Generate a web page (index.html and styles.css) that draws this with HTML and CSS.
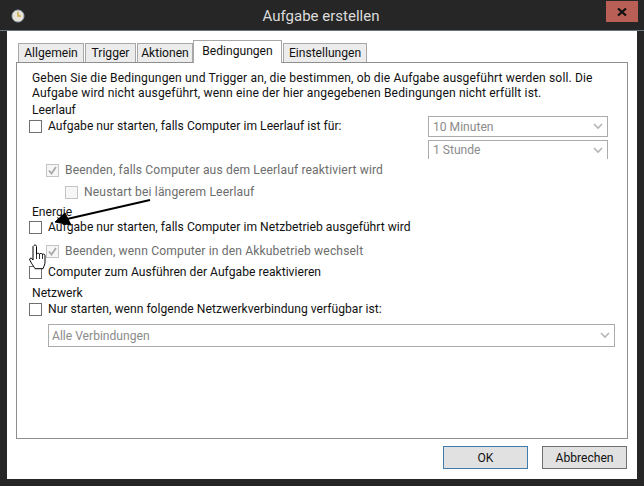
FILE: index.html
```html
<!DOCTYPE html>
<html lang="de">
<head>
<meta charset="utf-8">
<title>Aufgabe erstellen</title>
<link rel="stylesheet" href="styles.css">
</head>
<body>
<div class="window">
  <header class="titlebar">
    <svg class="app-icon" width="16" height="16" viewBox="0 0 16 16"><circle cx="8" cy="8" r="6" fill="#e8e4d8" stroke="#9aa6b0"/><path d="M8 4v4h3" fill="none" stroke="#c9a648" stroke-width="1.5"/></svg>
    <h1 class="title">Aufgabe erstellen</h1>
    <button class="close"><svg width="10" height="8" viewBox="0 0 10 8"><path d="M1 0.500l8 7M9 0.500l-8 7" stroke="#111" stroke-width="2.2"/></svg></button>
  </header>
  <main class="client">
    <nav class="tabs">
      <span class="tab t1">Allgemein</span>
      <span class="tab t2">Trigger</span>
      <span class="tab t3">Aktionen</span>
      <span class="tab active">Bedingungen</span>
      <span class="tab t5">Einstellungen</span>
    </nav>
    <section class="panel">
      <p class="intro">Geben Sie die Bedingungen und Trigger an, die bestimmen, ob die Aufgabe ausgeführt werden soll. Die Aufgabe wird nicht ausgeführt, wenn eine der hier angegebenen Bedingungen nicht erfüllt ist.</p>
      <h2 class="group">Leerlauf</h2>
      <div class="idle">
        <div class="idle-checks">
          <label class="check"><span class="box"></span>Aufgabe nur starten, falls Computer im Leerlauf ist für:</label>
        </div>
        <div class="idle-combos">
          <div class="combo disabled small"><span>10 Minuten</span><svg class="chev" width="10" height="7" viewBox="0 0 10 7"><path d="M1 1l4 4 4-4" fill="none" stroke="#b5b5b5" stroke-width="1.6"/></svg></div>
          <div class="combo disabled small cut"><span>1 Stunde</span><svg class="chev" width="10" height="7" viewBox="0 0 10 7"><path d="M1 1l4 4 4-4" fill="none" stroke="#b5b5b5" stroke-width="1.6"/></svg></div>
        </div>
      </div>
      <label class="check disabled ind1 r-end"><span class="box on"><svg width="11" height="11" viewBox="0 0 11 11"><path d="M2 5.5l2.5 3L9 2" fill="none" stroke="#a8a8a8" stroke-width="1.8"/></svg></span>Beenden, falls Computer aus dem Leerlauf reaktiviert wird</label>
      <label class="check disabled ind2 r-new"><span class="box"></span>Neustart bei längerem Leerlauf</label>
      <h2 class="group g-energy">Energie</h2>
      <label class="check r-a"><span class="box"></span>Aufgabe nur starten, falls Computer im Netzbetrieb ausgeführt wird</label>
      <label class="check disabled ind1 r-b"><span class="box on"><svg width="11" height="11" viewBox="0 0 11 11"><path d="M2 5.5l2.5 3L9 2" fill="none" stroke="#a8a8a8" stroke-width="1.8"/></svg></span>Beenden, wenn Computer in den Akkubetrieb wechselt</label>
      <label class="check r-c"><span class="box"></span>Computer zum Ausführen der Aufgabe reaktivieren</label>
      <h2 class="group g-net">Netzwerk</h2>
      <label class="check r-d"><span class="box"></span>Nur starten, wenn folgende Netzwerkverbindung verfügbar ist:</label>
      <div class="combo disabled wide"><span>Alle Verbindungen</span><svg class="chev" width="10" height="7" viewBox="0 0 10 7"><path d="M1 1l4 4 4-4" fill="none" stroke="#b5b5b5" stroke-width="1.6"/></svg></div>
    </section>
    <footer class="actions">
      <button class="btn primary">OK</button>
      <button class="btn">Abbrechen</button>
    </footer>
  </main>
  <svg class="arrow" width="100" height="32" viewBox="0 0 100 32"><path d="M95 1L12 20" stroke="#000" stroke-width="1.8" fill="none"/><path d="M0 23L10 14L16 26Z" fill="#000" stroke="#000" stroke-linejoin="round"/></svg>
  <svg class="hand" width="18" height="27" viewBox="0 0 18 27"><path d="M5 1.5c1-1 2.500-.5 2.500 1V10c1-1 2-1 3 0 1-.8 2-.8 3 .2 1-.5 2.500 0 2.500 1.500v6c0 3-1 4-2 7H6c-1-2-2-3-3.500-5.500L.8 16c-.5-1.500 1-2.500 2-1.500L4 16V2.500z" fill="#fff" stroke="#000" stroke-width="1"/><path d="M7.500 10v5M10.500 10v5M13.500 10v5" stroke="#000" stroke-width=".8"/></svg>
</div>
</body>
</html>
```
FILE: styles.css
```css
* { box-sizing: border-box; }
html, body { margin: 0; padding: 0; }
body { width: 644px; height: 486px; overflow: hidden; background: #262626; font-family: Roboto, "Noto Sans", sans-serif; font-size: 12.1px; color: #111; }
.window { position: relative; width: 644px; height: 486px; display: flex; flex-direction: column; background: #262626; }
.titlebar { height: 31px; flex: none; display: flex; align-items: flex-start; position: relative; border-bottom: 1px solid #6c7480; }
.app-icon { position: absolute; left: 10px; top: 8px; }
.title { flex: 1; margin: 6px 0 0; padding-right: 2px; text-align: center; font-weight: 400; font-size: 15px; line-height: 20px; color: #dcdcdc; }
.close { position: absolute; left: 606px; top: 1px; width: 32px; height: 21px; border: 0; padding: 0; background: #b95f55; display: flex; align-items: center; justify-content: center; }
.client { flex: 1; margin: 0 7px 7px; background: #fff; display: flex; flex-direction: column; padding: 9px 9px 0 9px; }
.tabs { display: flex; height: 22px; align-items: flex-end; padding-left: 2px; position: relative; z-index: 1; }
.tab { height: 19px; border: 1px solid #a8a8a8; border-bottom: 0; background: #ececec; line-height: 18px; text-align: center; margin-right: 1px; }
.t1 { width: 66px; } .t2 { width: 51px; } .t3 { width: 56px; margin-right: 0; } .t5 { width: 84px; }
.tab.active { width: 89px; height: 23px; background: #fff; margin-bottom: -1px; line-height: 20px; }
.panel { height: 377px; border: 1px solid #8e8e8e; background: #fff; padding: 8px 0 0 15px; }
.intro { margin: 0; width: 575px; line-height: 15px; letter-spacing: 0.13px; }
.group { margin: 2px 0 0; font-weight: 400; font-size: inherit; line-height: 15px; }
.check { display: flex; align-items: center; height: 16px; white-space: nowrap; letter-spacing: 0.03px; }
.box { width: 13px; height: 13px; flex: none; border: 1px solid #707070; background: #fff; margin-right: 6px; margin-left: -3px; display: flex; align-items: center; justify-content: center; }
.check.disabled { color: #6d6d6d; letter-spacing: 0.14px; }
.disabled .box { border-color: #c4c4c4; background: #f6f6f6; }
.idle { display: flex; justify-content: space-between; height: 47px; padding-right: 19px; }
.idle-checks { padding-top: 0; }
.idle-combos { display: flex; flex-direction: column; gap: 3px; margin-top: -2px; }
.combo { display: flex; align-items: center; justify-content: space-between; border: 1px solid #ababab; background: #fff; color: #8b8b8b; padding: 0 4px 0 4px; }
.combo.small { width: 180px; height: 21px; }
.combo.cut { border-bottom: 0; height: 19px; }
.combo.wide { width: 567px; height: 23px; margin: 7px 0 0 16px; padding-left: 3px; }
.ind1 { margin-left: 17px; } .ind2 { margin-left: 36px; }
.r-end { margin-top: -3px; } .r-new { margin-top: 6px; }
.g-energy { margin-top: 5px; } .r-a { margin-top: -1px; } .r-b { margin-top: 8px; } .r-c { margin-top: 5px; }
.g-net { margin-top: 6px; } .r-d { margin-top: 0; }
.actions { display: flex; justify-content: flex-end; padding: 7px 1px 0 0; gap: 14px; }
.btn { width: 85px; height: 23px; border: 1px solid #707070; background: #e1e1e1; font: inherit; color: #111; padding: 0; }
.btn.primary { border-color: #3f7cab; }
.arrow { position: absolute; left: 55px; top: 199px; }
.hand { position: absolute; left: 29px; top: 244px; }
```
